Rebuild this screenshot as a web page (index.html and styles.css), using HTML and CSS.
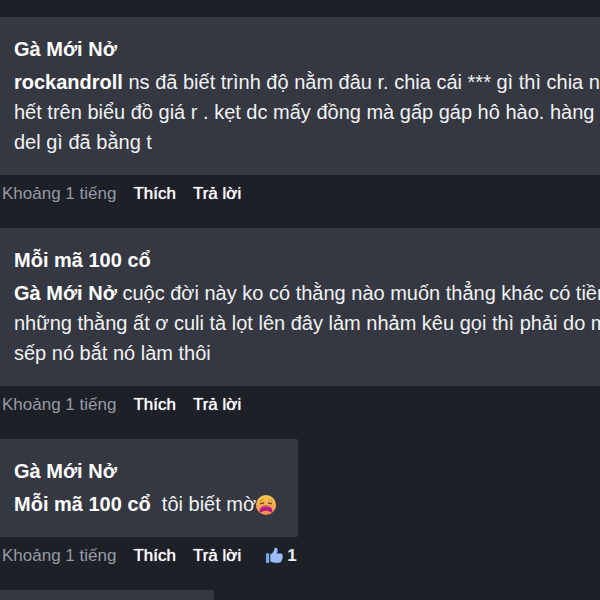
FILE: index.html
```html
<!DOCTYPE html>
<html lang="vi">
<head>
<meta charset="utf-8">
<title>Bình luận</title>
<link rel="stylesheet" href="styles.css">
</head>
<body>
<main class="thread">
  <article class="comment">
    <div class="bubble">
      <h2 class="author">Gà Mới Nở</h2>
      <p class="text"><a href="#" class="mention">rockandroll</a> ns đã biết trình độ nằm đâu r. chia cái *** gì thì chia nó<br>hết trên biểu đồ giá r . kẹt dc mấy đồng mà gấp gáp hô hào. hàng ch<br>del gì đã bằng t</p>
    </div>
    <footer class="actions"><time>Khoảng 1 tiếng</time><button type="button">Thích</button><button type="button">Trả lời</button></footer>
  </article>
  <article class="comment">
    <div class="bubble">
      <h2 class="author">Mỗi mã 100 cổ</h2>
      <p class="text"><a href="#" class="mention">Gà Mới Nở</a> cuộc đời này ko có thằng nào muốn thẳng khác có tiền<br>những thằng ất ơ culi tà lọt lên đây lảm nhảm kêu gọi thì phải do mấ<br>sếp nó bắt nó làm thôi</p>
    </div>
    <footer class="actions"><time>Khoảng 1 tiếng</time><button type="button">Thích</button><button type="button">Trả lời</button></footer>
  </article>
  <article class="comment">
    <div class="bubble short">
      <h2 class="author">Gà Mới Nở</h2>
      <p class="text"><a href="#" class="mention">Mỗi mã 100 cổ</a>&nbsp; tôi biết mờ<svg class="emoji" viewBox="0 0 20 20" role="img" aria-label="mệt mỏi"><defs><linearGradient id="face" x2="0" y2="1"><stop stop-color="#f6cf4d"/><stop offset="1" stop-color="#ee8a55"/></linearGradient></defs><circle cx="10" cy="10" r="10" fill="url(#face)"/><path d="M3.500 6Q6 5.500 7.500 3.800M12.500 3.800Q14 5.500 16.500 6" stroke="#c57b2c" stroke-width="1" fill="none"/><path d="M4 8.500Q6 9 8 7.500M12 7.500Q14 9 16 8.500" stroke="#69401f" stroke-width="1.300" fill="none"/><path d="M3.500 17Q4 10.500 10 10.500T16.500 17Q15 18 13.500 16.500Q10 15 6.500 16.500Q5 18 3.500 17Z" fill="#b51c80"/><path d="M6 12.300Q10 10.200 14 12.300" stroke="#d8598e" stroke-width="1" fill="none"/></svg></p>
    </div>
    <footer class="actions"><time>Khoảng 1 tiếng</time><button type="button">Thích</button><button type="button">Trả lời</button><span class="likes"><svg class="thumb" viewBox="0 0 16 16" aria-hidden="true"><path d="M0 6h3v9H0z" fill="#7ba5ee"/><path d="M4 7Q8 5 8 1Q11 0 11 3Q11 5 10 6H14Q16 6 15.500 8Q16.500 9 15.300 10.200Q16 11.500 14.700 12.300Q15 14.500 12.500 14.800H8Q6 14.800 4 13.500Z" fill="#9bbcf6"/></svg>1</span></footer>
  </article>
  <article class="comment"><div class="bubble next"></div></article>
</main>
</body>
</html>
```
FILE: styles.css
```css
* { box-sizing: border-box; }
body { margin: 0; background: #1e2028; color: #f0f1f3; font: 20px/30px "Liberation Sans", Arial, sans-serif; overflow: hidden; }
.thread { height: 100vh; padding-top: 17px; overflow: hidden; }
.bubble { background: #353840; padding: 17px 14px 18px; white-space: nowrap; }
.short { width: fit-content; padding-right: 22px; border-radius: 0 2px 2px 0; }
.next { width: 214px; height: 40px; border-radius: 0 2px 0 0; }
.author { margin: 0 0 3px; color: #fff; font-size: 20px; line-height: 30px; }
.text { margin: 0; }
.mention { color: #fff; font-weight: bold; text-decoration: none; }
.actions { display: flex; align-items: center; height: 53px; padding: 0 2px 16px; gap: 17px; font-size: 17px; line-height: 24px; }
.actions time { color: #9699a3; }
.actions button { padding: 0; border: 0; background: none; color: #fff; font: inherit; text-shadow: 0 0 1px #fff; }
.likes { display: flex; align-items: center; gap: 4px; margin-left: 8px; font-weight: bold; }
.emoji { width: 20px; height: 20px; vertical-align: -4px; }
.thumb { width: 17px; height: 17px; }
```
